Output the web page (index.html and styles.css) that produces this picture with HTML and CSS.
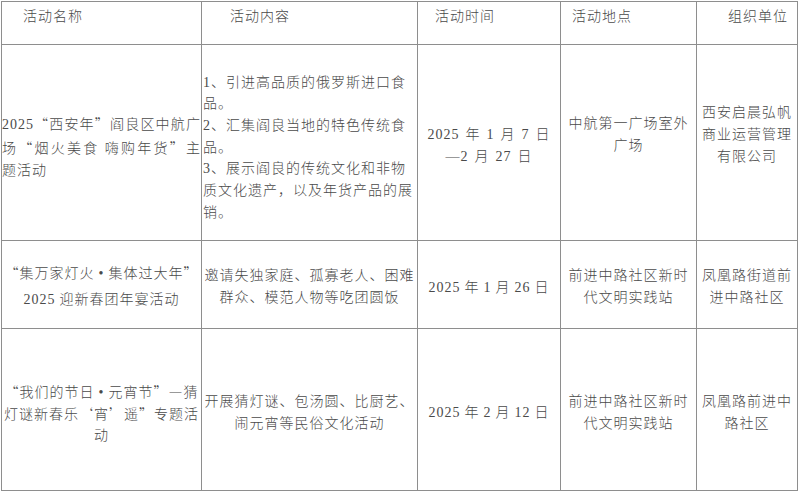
FILE: index.html
```html
<!DOCTYPE html>
<html lang="zh-CN">
<head>
<meta charset="utf-8">
<title>活动安排</title>
<link rel="stylesheet" href="styles.css">
</head>
<body>
<table class="sched">
  <colgroup>
    <col class="c-name">
    <col class="c-content">
    <col class="c-time">
    <col class="c-place">
    <col class="c-org">
  </colgroup>
  <thead>
    <tr class="r-head">
      <th class="h-name">活动名称</th>
      <th class="h-content">活动内容</th>
      <th class="h-time">活动时间</th>
      <th class="h-place">活动地点</th>
      <th class="h-org">组织单位</th>
    </tr>
  </thead>
  <tbody>
    <tr class="r-1">
      <td class="name cjk"><span class="jl"><span class="num">2025</span>“西安年”阎良区中航广</span><span class="jl">场“烟火美食 嗨购年货”主</span><span class="ll">题活动</span></td>
      <td class="content left">1、引进高品质的俄罗斯进口食<br>品。<br>2、汇集阎良当地的特色传统食<br>品。<br>3、展示阎良的传统文化和非物<br>质文化遗产，以及年货产品的展<br>销。</td>
      <td class="time">2025 年 1 月 7 日<br>—2 月 27 日</td>
      <td class="place">中航第一广场室外<br>广场</td>
      <td class="org">西安启晨弘帆<br>商业运营管理<br>有限公司</td>
    </tr>
    <tr class="r-2">
      <td class="name cjk">“集万家灯火<span class="dot">•</span>集体过大年”<br><span class="num">2025</span> 迎新春团年宴活动</td>
      <td class="content">邀请失独家庭、孤寡老人、困难<br>群众、模范人物等吃团圆饭</td>
      <td class="time">2025 年 1 月 26 日</td>
      <td class="place">前进中路社区新时<br>代文明实践站</td>
      <td class="org">凤凰路街道前<br>进中路社区</td>
    </tr>
    <tr class="r-3">
      <td class="name cjk">“我们的节日<span class="dot">•</span>元宵节”—猜<br>灯谜新春乐‘宵’遥”专题活<br>动</td>
      <td class="content">开展猜灯谜、包汤圆、比厨艺、<br>闹元宵等民俗文化活动</td>
      <td class="time">2025 年 2 月 12 日</td>
      <td class="place">前进中路社区新时<br>代文明实践站</td>
      <td class="org">凤凰路前进中<br>路社区</td>
    </tr>
  </tbody>
</table>
</body>
</html>
```

FILE: styles.css
```css
html, body {
  margin: 0;
  padding: 0;
  background: #ffffff;
}

body {
  padding: 1px 0 0 1px;
}

.sched {
  border-collapse: collapse;
  table-layout: fixed;
  width: 796px;
  font-family: "Liberation Serif", "Noto Sans CJK SC", serif;
  font-size: 14px;
  font-weight: 300;
  letter-spacing: 1px;
  line-height: 22px;
  color: #4a4a4a;
}

.c-name { width: 200px; }
.c-content { width: 216px; }
.c-time { width: 143px; }
.c-place { width: 136px; }
.c-org { width: 101px; }

.sched th,
.sched td {
  border: 1px solid #8e8e8e;
  padding: 0 1px;
  text-align: center;
  vertical-align: middle;
  font-weight: 300;
}

.sched .cjk {
  font-family: "Noto Sans CJK SC", "Liberation Serif", sans-serif;
}

.num {
  font-family: "Liberation Serif", serif;
}

.dot {
  font-family: "Liberation Serif", serif;
  padding: 0 4px;
}

/* header */
.r-head { height: 43px; }
.sched th {
  vertical-align: top;
  text-align: left;
  padding-top: 4px;
}
.sched .h-name { padding-left: 21px; }
.sched .h-content { padding-left: 28px; }
.sched .h-time { padding-left: 17px; }
.sched .h-place { padding-left: 11px; }
.sched .h-org { padding-left: 31px; }

/* row 1 */
.r-1 { height: 196px; }
.sched .r-1 .name {
  text-align: left;
  padding: 6px 0 0 0;
}
.jl {
  display: block;
  text-align: justify;
  text-align-last: justify;
}
.ll {
  display: block;
  text-align: left;
}
.sched .r-1 .content {
  text-align: left;
  line-height: 21.7px;
  padding-top: 10px;
}
.sched .r-1 .time { padding-top: 6px; word-spacing: 1.5px; }
.sched .r-1 .place,
.sched .r-1 .org { padding-bottom: 16px; }

/* row 2 */
.r-2 { height: 88px; }
.sched .r-2 td { padding-top: 4px; }
.sched .r-2 .name { line-height: 24px; padding-top: 2px; }
.sched .r-2 .time { padding-top: 6px; word-spacing: -0.5px; }

/* row 3 */
.r-3 { height: 162px; }
.sched .r-3 td { padding-top: 6px; }
.sched .r-3 .name { line-height: 21px; }
.sched .r-3 .time { word-spacing: -0.5px; }
```
